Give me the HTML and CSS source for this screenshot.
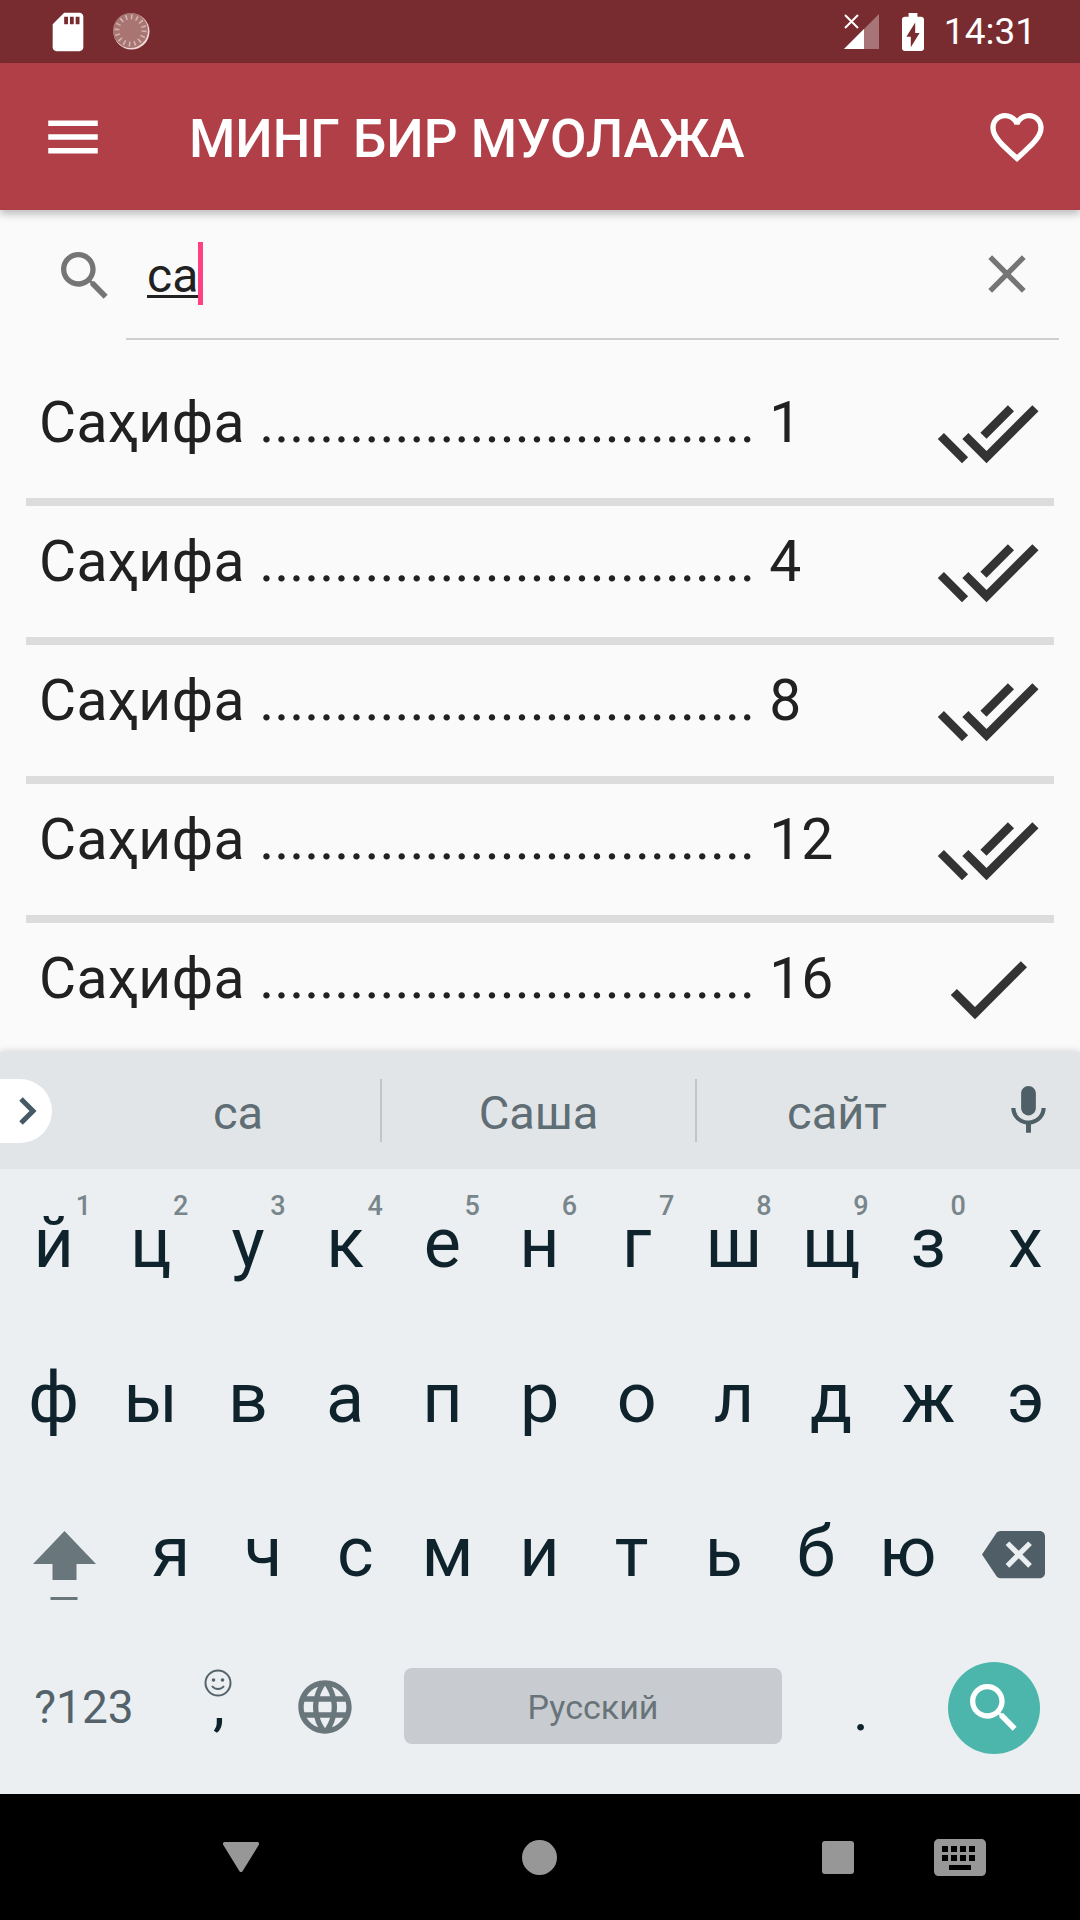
FILE: index.html
```html
<!DOCTYPE html>
<html lang="en">
<head>
  <meta charset="UTF-8">
  <title>Минг бир муолажа</title>
  <link rel="stylesheet" href="styles.css">
</head>
<body>

  <svg class="sprite" width="0" height="0">
    <symbol id="doneAll" viewBox="0 0 24 24"><path d="M18 7l-1.41-1.41-6.34 6.34 1.41 1.41L18 7zm4.24-1.41L11.66 16.17 7.48 12l-1.41 1.41L11.66 19l12-12-1.42-1.41zM.41 13.41L6 19l1.41-1.41L1.83 12 .41 13.41z"/></symbol>
    <symbol id="done" viewBox="0 0 24 24"><path d="M9 16.17L4.83 12l-1.42 1.41L9 19 21 7l-1.41-1.41z"/></symbol>
    <symbol id="search" viewBox="0 0 24 24"><path d="M15.5 14h-.79l-.28-.27C15.41 12.59 16 11.11 16 9.5 16 5.91 13.09 3 9.5 3S3 5.91 3 9.5 5.91 16 9.5 16c1.61 0 3.09-.59 4.23-1.57l.27.28v.79l5 4.99L20.49 19l-4.99-5zm-6 0C7.01 14 5 11.99 5 9.5S7.01 5 9.5 5 14 7.01 14 9.5 11.99 14 9.5 14z"/></symbol>
  </svg>

  <div class="status-bar">
    <svg class="sd-icon" viewBox="0 0 24 24"><path d="M18 2h-8L4.02 8 4 20c0 1.1.9 2 2 2h12c1.1 0 2-.9 2-2V4c0-1.1-.9-2-2-2zm-6 6h-2V4h2v4zm3 0h-2V4h2v4zm3 0h-2V4h2v4z"/></svg>
    <svg class="sync-icon" viewBox="0 0 37 37">
      <circle cx="18.5" cy="18.5" r="18" fill="#f0d8d8" />
      <circle cx="17.5" cy="17.5" r="17.5" fill="#a87573" />
      <circle cx="17.5" cy="17.5" r="13.5" fill="none" stroke="#d3b3b2" stroke-width="5" stroke-dasharray="1.6 3.7" />
    </svg>
    <svg class="signal-icon" viewBox="0 0 35 35">
      <polygon points="35,0 35,35 0,35" fill="#fff" opacity="0.35" />
      <polygon points="20,15 20,35 0,35" fill="#fff" />
      <path d="M1 1l13 13M14 1L1 14" stroke="#fff" stroke-width="2" fill="none" />
    </svg>
    <svg class="battery-icon" viewBox="7 2 10 20" preserveAspectRatio="none"><path d="M15.67 4H14V2h-4v2H8.33C7.6 4 7 4.6 7 5.33v15.33C7 21.4 7.6 22 8.33 22h7.33c.74 0 1.34-.6 1.34-1.33V5.33C17 4.6 16.4 4 15.67 4zM11 20v-5.5H9L13 7v5.5h2L11 20z"/></svg>
    <span class="clock">14:31</span>
  </div>

  <header class="app-bar">
    <svg class="menu-icon" viewBox="0 0 24 24"><path d="M3 18h18v-2H3v2zm0-5h18v-2H3v2zm0-5h18V6H3v2z"/></svg>
    <h1 class="app-title">МИНГ БИР МУОЛАЖА</h1>
    <svg class="heart-icon" viewBox="0 0 24 24"><path d="M16.5 3c-1.74 0-3.41.81-4.5 2.09C10.91 3.81 9.24 3 7.5 3 4.42 3 2 5.42 2 8.5c0 3.78 3.4 6.86 8.55 11.54L12 21.35l1.45-1.32C18.6 15.36 22 12.28 22 8.5 22 5.42 19.58 3 16.5 3zm-4.4 15.55l-.1.1-.1-.1C7.14 14.24 4 11.39 4 8.5 4 6.5 5.5 5 7.5 5c1.54 0 3.04.99 3.57 2.36h1.87C13.46 5.99 14.96 5 16.5 5c2 0 3.5 1.5 3.5 3.5 0 2.89-3.14 5.74-7.9 10.05z"/></svg>
  </header>

  <main class="content">
    <div class="search-row">
      <svg class="search-icon"><use href="#search"/></svg>
      <div class="search-field">
        <span class="search-text">са</span><span class="caret"></span>
        <svg class="clear-icon" viewBox="0 0 24 24"><path d="M19 6.41L17.59 5 12 10.59 6.41 5 5 6.41 10.59 12 5 17.59 6.41 19 12 13.41 17.59 19 19 17.59 13.41 12z"/></svg>
      </div>
    </div>

    <div class="page-list">
      <div class="page-row">
        <span class="page-label"><span class="page-word">Саҳифа</span> ................................. 1</span>
        <svg class="check-icon"><use href="#doneAll"/></svg>
      </div>
      <div class="page-row">
        <span class="page-label"><span class="page-word">Саҳифа</span> ................................. 4</span>
        <svg class="check-icon"><use href="#doneAll"/></svg>
      </div>
      <div class="page-row">
        <span class="page-label"><span class="page-word">Саҳифа</span> ................................. 8</span>
        <svg class="check-icon"><use href="#doneAll"/></svg>
      </div>
      <div class="page-row">
        <span class="page-label"><span class="page-word">Саҳифа</span> ................................. 12</span>
        <svg class="check-icon"><use href="#doneAll"/></svg>
      </div>
      <div class="page-row">
        <span class="page-label"><span class="page-word">Саҳифа</span> ................................. 16</span>
        <svg class="check-icon"><use href="#done"/></svg>
      </div>
    </div>
  </main>

  <section class="keyboard">
    <div class="suggestions">
      <div class="expand-pill">
        <svg width="19" height="30" viewBox="0 0 19 30"><path d="M3 3l12 12L3 27" fill="none" stroke="#455a64" stroke-width="5"/></svg>
      </div>
      <div class="suggestion first">са</div>
      <div class="suggestion middle">Саша</div>
      <div class="suggestion last">сайт</div>
      <div class="mic-key">
        <svg class="mic-icon" viewBox="0 0 24 24"><path d="M12 14c1.66 0 2.99-1.34 2.99-3L15 5c0-1.66-1.34-3-3-3S9 3.34 9 5v6c0 1.66 1.34 3 3 3zm5.3-3c0 3-2.54 5.1-5.3 5.1S6.7 14 6.7 11H5c0 3.41 2.72 6.23 6 6.72V21h2v-3.28c3.28-.48 6-3.3 6-6.72h-1.7z"/></svg>
      </div>
    </div>

    <div class="keys">
      <div class="key-row">
        <div class="key">й<sup class="hint">1</sup></div>
        <div class="key">ц<sup class="hint">2</sup></div>
        <div class="key">у<sup class="hint">3</sup></div>
        <div class="key">к<sup class="hint">4</sup></div>
        <div class="key">е<sup class="hint">5</sup></div>
        <div class="key">н<sup class="hint">6</sup></div>
        <div class="key">г<sup class="hint">7</sup></div>
        <div class="key">ш<sup class="hint">8</sup></div>
        <div class="key">щ<sup class="hint">9</sup></div>
        <div class="key">з<sup class="hint">0</sup></div>
        <div class="key">х</div>
      </div>
      <div class="key-row">
        <div class="key">ф</div>
        <div class="key">ы</div>
        <div class="key">в</div>
        <div class="key">а</div>
        <div class="key">п</div>
        <div class="key">р</div>
        <div class="key">о</div>
        <div class="key">л</div>
        <div class="key">д</div>
        <div class="key">ж</div>
        <div class="key">э</div>
      </div>
      <div class="key-row third">
        <div class="key shift">
          <svg class="shift-icon" viewBox="0 0 63 69">
            <polygon points="31.5,0 63,33 43.5,33 43.5,49 19.5,49 19.5,33 0,33" />
            <rect x="17.5" y="66" width="27" height="3" />
          </svg>
        </div>
        <div class="key">я</div>
        <div class="key">ч</div>
        <div class="key">с</div>
        <div class="key">м</div>
        <div class="key">и</div>
        <div class="key">т</div>
        <div class="key">ь</div>
        <div class="key">б</div>
        <div class="key">ю</div>
        <div class="key backspace">
          <svg class="backspace-icon" viewBox="0 0 24 24"><path d="M22 3H7c-.69 0-1.23.35-1.59.88L0 12l5.41 8.11c.36.53.9.89 1.59.89h15c1.1 0 2-.9 2-2V5c0-1.1-.9-2-2-2zm-3 12.59L17.59 17 14 13.41 10.41 17 9 15.59 12.59 12 9 8.41 10.41 7 14 10.59 17.59 7 19 8.41 15.41 12 19 15.59z"/></svg>
        </div>
      </div>
      <div class="key-row bottom">
        <div class="key symbols">?123</div>
        <div class="key comma">,
          <svg class="smile-icon" viewBox="0 0 28 28">
            <circle cx="14" cy="14" r="12.5" fill="none" stroke="#54636b" stroke-width="2" />
            <circle cx="9.5" cy="11" r="1.8" fill="#54636b" />
            <circle cx="18.5" cy="11" r="1.8" fill="#54636b" />
            <path d="M8 17c3 4 9 4 12 0" fill="none" stroke="#54636b" stroke-width="2" />
          </svg>
        </div>
        <div class="key globe">
          <svg class="globe-icon" viewBox="0 0 24 24"><path d="M11.99 2C6.47 2 2 6.48 2 12s4.47 10 9.99 10C17.52 22 22 17.52 22 12S17.52 2 11.99 2zm6.93 6h-2.95c-.32-1.25-.78-2.45-1.38-3.56 1.84.63 3.37 1.91 4.33 3.56zM12 4.04c.83 1.2 1.48 2.53 1.91 3.96h-3.82c.43-1.43 1.08-2.76 1.91-3.96zM4.26 14C4.1 13.36 4 12.69 4 12s.1-1.36.26-2h3.38c-.08.66-.14 1.32-.14 2 0 .68.06 1.34.14 2H4.26zm.82 2h2.95c.32 1.25.78 2.45 1.38 3.56-1.84-.63-3.37-1.9-4.33-3.56zm2.95-8H5.08c.96-1.66 2.49-2.93 4.33-3.56C8.81 5.55 8.35 6.75 8.03 8zM12 19.96c-.83-1.2-1.48-2.53-1.91-3.96h3.82c-.43 1.43-1.08 2.76-1.91 3.96zM14.34 14H9.66c-.09-.66-.16-1.32-.16-2 0-.68.07-1.35.16-2h4.68c.09.65.16 1.32.16 2 0 .68-.07 1.34-.16 2zm.25 5.56c.6-1.11 1.06-2.31 1.38-3.56h2.95c-.96 1.65-2.49 2.93-4.33 3.56zM16.36 14c.08-.66.14-1.32.14-2 0-.68-.06-1.34-.14-2h3.38c.16.64.26 1.31.26 2s-.1 1.36-.26 2h-3.38z"/></svg>
        </div>
        <div class="space-key">Русский</div>
        <div class="key period">.</div>
        <div class="enter-key">
          <svg class="enter-icon"><use href="#search"/></svg>
        </div>
      </div>
    </div>
  </section>

  <nav class="nav-bar">
    <svg class="nav-back" viewBox="0 0 36 30"><path d="M2 0h32c1.500 0 2.400 1 2 2.500L20 28.500c-1 2-3 2-4 0L0 2.500C-.4 1 .5 0 2 0z"/></svg>
    <div class="nav-home"></div>
    <div class="nav-recent"></div>
    <svg class="nav-keyboard" viewBox="0 0 52 37">
      <path fill-rule="evenodd" d="M5 0h42c3 0 5 2 5 5v27c0 3-2 5-5 5H5c-3 0-5-2-5-5V5c0-3 2-5 5-5zM8 7v6h6V7zm9 0v6h6V7zm9 0v6h6V7zm9 0v6h6V7zM8 16v6h6v-6zm9 0v6h6v-6zm9 0v6h6v-6zm9 0v6h6v-6zM15 26v5h22v-5z"/>
    </svg>
  </nav>

</body>
</html>
```

FILE: styles.css
```css
* {
  box-sizing: border-box;
}

body {
  font-family: Roboto, sans-serif;
  margin: 0;
  width: 1080px;
  height: 1920px;
  overflow: hidden;
  display: flex;
  flex-direction: column;
  background: #fafafa;
}

svg {
  display: block;
  flex: none;
  fill: currentColor;
}

.sprite {
  position: absolute;
}

/* status bar */
.status-bar {
  height: 63px;
  flex: none;
  display: flex;
  align-items: center;
  padding: 0 44px 0 45px;
  background: #792c2f;
  color: white;
}

.sd-icon {
  width: 46px;
  height: 46px;
}

.sync-icon {
  width: 37px;
  height: 37px;
  margin-left: 22px;
}

.signal-icon {
  width: 35px;
  height: 35px;
  margin-left: auto;
}

.battery-icon {
  width: 22px;
  height: 38px;
  margin-left: 23px;
}

.clock {
  font-size: 37px;
  margin-left: 20px;
  line-height: 65px;
}

/* app bar */
.app-bar {
  height: 147px;
  flex: none;
  display: flex;
  align-items: center;
  padding: 0 31px 0 40px;
  background: #b03f47;
  color: white;
  box-shadow: 0 4px 8px rgba(0,0,0,0.25);
  position: relative;
}

.menu-icon {
  width: 66px;
  height: 66px;
}

.app-title {
  margin: 5px 0 0 83px;
  font-size: 53px;
  font-weight: 500;
}

.heart-icon {
  width: 64px;
  height: 64px;
  margin-left: auto;
}

/* search + list */
.content {
  flex: 1;
  min-height: 0;
  overflow: hidden;
}

.search-row {
  height: 130px;
  display: flex;
  padding-right: 21px;
}

.search-icon {
  width: 64px;
  height: 64px;
  margin: 34px 9px 0 53px;
  color: #757575;
}

.search-field {
  flex: 1;
  display: flex;
  align-items: flex-start;
  border-bottom: 2px solid #cfcfcf;
  padding-left: 21px;
}

.search-text {
  font-size: 48px;
  line-height: 65px;
  margin-top: 33px;
  height: 55px;
  color: #212121;
  border-bottom: 3px solid #212121;
}

.caret {
  width: 5px;
  height: 63px;
  margin-top: 32px;
  background: #ff4081;
}

.clear-icon {
  width: 64px;
  height: 64px;
  margin: 32px 20px 0 auto;
  color: #757575;
}

.page-list {
  margin: 27px 26px 0;
}

.page-row {
  height: 139px;
  display: flex;
  align-items: center;
  padding: 0 14px 0 13px;
  border-bottom: 8px solid #dcdcdc;
}

.page-label {
  font-size: 57px;
  line-height: 66px;
  padding-bottom: 20px;
  color: #212121;
  white-space: nowrap;
}

.page-word {
  letter-spacing: 0.5px;
}

.check-icon {
  width: 104px;
  height: 104px;
  margin-left: auto;
  color: #333;
}

/* keyboard */
.keyboard {
  flex: none;
  height: 742px;
  display: flex;
  flex-direction: column;
  background: #eceff1;
  box-shadow: 0 -2px 6px rgba(0,0,0,0.12);
  position: relative;
}

.suggestions {
  height: 117px;
  flex: none;
  display: flex;
  align-items: center;
  background: #e2e5e8;
}

.expand-pill {
  width: 52px;
  height: 64px;
  display: flex;
  align-items: center;
  padding-left: 18px;
  background: white;
  border-radius: 0 32px 32px 0;
}

.suggestion {
  height: 63px;
  display: flex;
  align-items: center;
  justify-content: center;
  padding-top: 3px;
  font-size: 47px;
  color: #5f6e75;
}

.first {
  width: 284px;
  margin-left: 44px;
}

.middle {
  width: 317px;
  border-left: 2px solid #c0c5c9;
  border-right: 2px solid #c0c5c9;
}

.last {
  width: 280px;
}

.mic-key {
  flex: 1;
  display: flex;
  justify-content: center;
  color: #4f5f67;
}

.mic-icon {
  width: 59px;
  height: 59px;
}

.keys {
  flex: 1;
}

.key-row {
  height: 154.5px;
  display: flex;
  padding: 0 6px 6px 5px;
}

.key-row.third {
  padding: 0 4px 6px;
}

.key {
  flex: 1;
  position: relative;
  display: flex;
  align-items: center;
  justify-content: center;
  font-size: 70px;
  color: #0f232c;
}

.key.shift {
  flex: none;
  width: 121px;
}

.key.backspace {
  flex: none;
  width: 122px;
  padding: 5px 2px 0 0;
}

.hint {
  position: absolute;
  top: 21px;
  right: 11px;
  font-size: 27px;
  line-height: 32px;
  font-weight: 500;
  color: #78868c;
}

.shift-icon {
  width: 63px;
  height: 69px;
  margin-top: 26px;
  color: #69777d;
}

.backspace-icon {
  width: 63px;
  height: 63px;
  color: #505f67;
}

.bottom {
  padding: 0 30px 6px 4px;
}

.key.symbols {
  flex: none;
  width: 160px;
  font-size: 46px;
  color: #54636b;
}

.key.comma {
  flex: none;
  width: 108px;
  font-size: 60px;
  padding: 0 0 6px 2px;
}

.smile-icon {
  position: absolute;
  top: 36px;
  left: 40px;
  width: 28px;
  height: 28px;
}

.key.globe {
  flex: none;
  width: 105px;
  color: #69777d;
}

.globe-icon {
  width: 64px;
  height: 64px;
}

.space-key {
  width: 378px;
  height: 76px;
  margin: 35px 0 0 27px;
  display: flex;
  align-items: center;
  justify-content: center;
  padding-top: 3px;
  font-size: 34px;
  color: #687479;
  background: #c8ccd0;
  border-radius: 8px;
}

.key.period {
  flex: none;
  width: 156px;
  font-size: 60px;
  padding: 6px 0 0 2px;
}

.enter-key {
  width: 92px;
  height: 92px;
  margin: 29px 0 0 10px;
  display: flex;
  align-items: center;
  justify-content: center;
  border-radius: 50%;
  background: #4db6ac;
  color: white;
}

.enter-icon {
  width: 64px;
  height: 64px;
}

/* nav bar */
.nav-bar {
  height: 126px;
  flex: none;
  display: flex;
  align-items: center;
  background: #000;
  color: #979797;
}

.nav-back {
  width: 36px;
  height: 30px;
  margin-left: 223px;
}

.nav-home {
  width: 35px;
  height: 35px;
  margin-left: 263px;
  border-radius: 50%;
  background: #979797;
}

.nav-recent {
  width: 32px;
  height: 33px;
  margin-left: 265px;
  border-radius: 3px;
  background: #979797;
}

.nav-keyboard {
  width: 52px;
  height: 37px;
  margin-left: 80px;
}
```
